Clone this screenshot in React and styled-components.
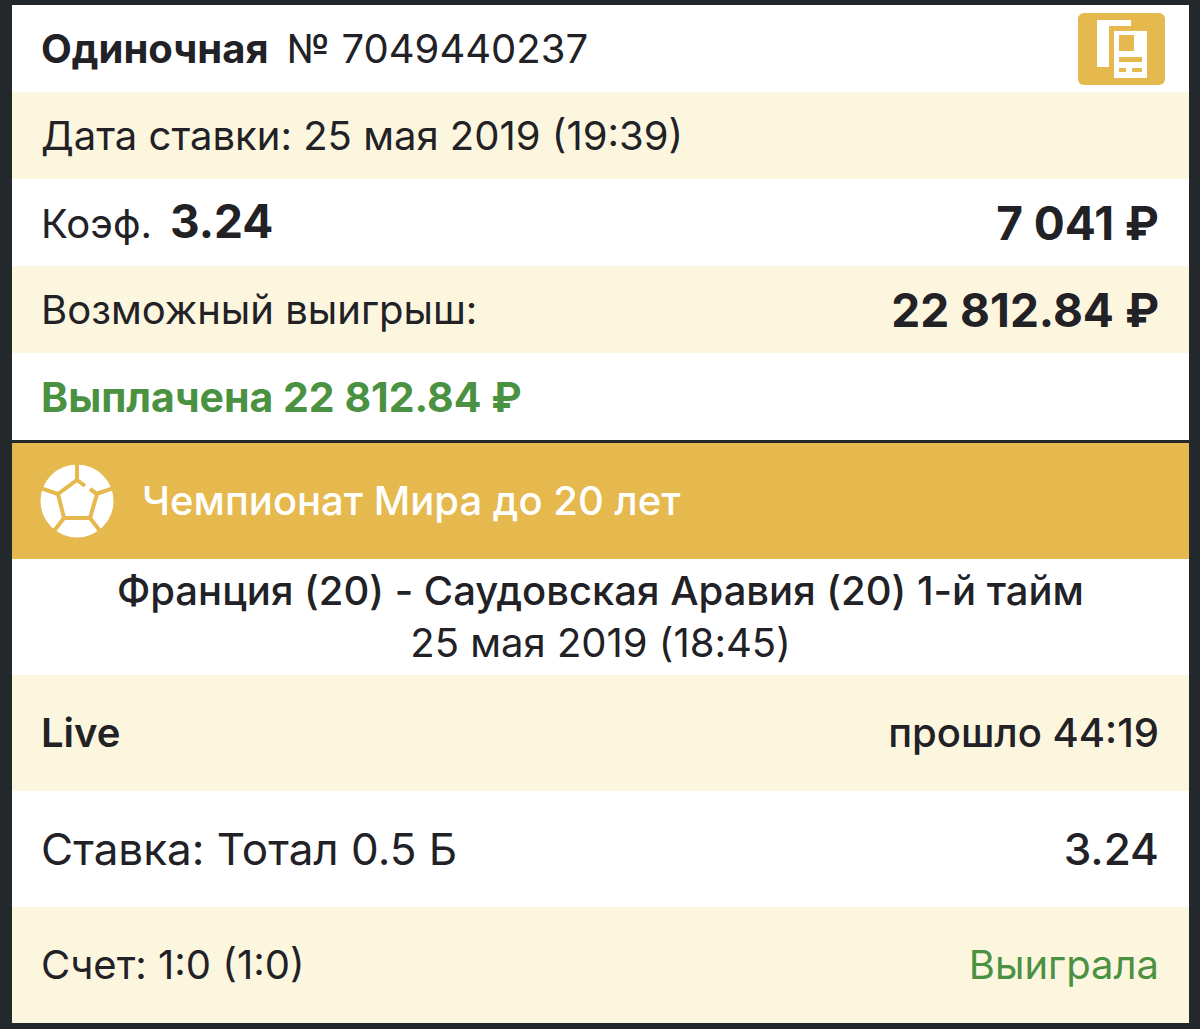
import React from "react";
import styled, { createGlobalStyle } from "styled-components";

const GlobalStyle = createGlobalStyle`
  * { box-sizing: border-box; }
  body {
    margin: 0;
    background: #23282c;
    color: #212126;
    font-family: Inter, "Liberation Sans", sans-serif;
    font-size: 40px;
    line-height: 52px;
  }
`;

const Page = styled.main`
  padding: 5px 11px 6px 12px;
`;

const Ticket = styled.article`
  display: flex;
  flex-direction: column;
  gap: 3px;
`;

const Section = styled.section`
  display: flex;
  flex-direction: column;
`;

const Row = styled.div`
  display: flex;
  align-items: center;
  justify-content: space-between;
  min-height: ${(p) => (p.$tall ? 116 : 87)}px;
  padding: 0 30px 0 29px;
  background: ${(p) => (p.$tinted ? "#fdf6df" : "#ffffff")};
`;

const HeaderRow = styled(Row)`
  padding-right: 24px;
`;

const Pair = styled.div`
  display: flex;
  align-items: baseline;
  gap: 18px;
`;

const Title = styled(Pair)`
  margin: 0;
  font-size: 40px;
  font-weight: 400;
`;

const Text = styled.span`
  color: ${(p) => (p.$win ? "#4b9142" : "inherit")};
  font-size: ${(p) => p.$size || 40}px;
  font-weight: ${(p) => p.$weight || 400};
`;

const Amount = styled(Text)`
  font-size: 46px;
  font-weight: 700;
`;

const CopyButton = styled.button`
  display: flex;
  width: 87px;
  height: 72px;
  padding: 0;
  border: 0;
  border-radius: 6px;
  background: #e6b94f;
  cursor: pointer;
`;

const League = styled.header`
  display: flex;
  align-items: center;
  gap: 28px;
  min-height: 116px;
  padding: 0 28px;
  background: #e6b94f;
  color: #ffffff;
`;

const LeagueName = styled.h2`
  margin: 0;
  font-size: 40px;
  font-weight: 500;
`;

const Match = styled.div`
  display: flex;
  flex-direction: column;
  align-items: center;
  justify-content: center;
  min-height: 116px;
  padding: 0 30px;
  background: #ffffff;
  text-align: center;
  font-variant-ligatures: no-contextual;
`;

function CouponIcon() {
  return (
    <svg width="87" height="72" viewBox="0 0 87 72" aria-hidden="true">
      <path d="M19 7H53V13H31V54H19Z" fill="#fff" />
      <path d="M36 18H69V65H36Z" fill="#fff" />
      <path
        d="M41 22H56V38H41ZM41 44H64V49H41ZM41 55H48V59H41ZM54 55H64V59H54Z"
        fill="#e6b94f"
      />
    </svg>
  );
}

function BallIcon() {
  return (
    <svg width="74" height="74" viewBox="0 0 74 74" aria-hidden="true">
      <circle cx="37" cy="37" r="36.5" fill="#fff" />
      <path
        d="M37 0V17M0 24L18 30M74 24L56 30M14 67L24 54M60 67L50 54M45 22L37 16L18 30L24 54H50L57 30L50 25"
        fill="none"
        stroke="#e6b94f"
        strokeWidth="4"
      />
    </svg>
  );
}

export default function App() {
  return (
    <Page>
      <GlobalStyle />
      <Ticket>
        <Section>
          <HeaderRow>
            <Title as="h1">
              <Text $weight={700}>Одиночная</Text>
              <Text>№ 7049440237</Text>
            </Title>
            <CopyButton type="button" aria-label="Купон">
              <CouponIcon />
            </CopyButton>
          </HeaderRow>
          <Row $tinted>
            <Text>Дата ставки: 25 мая 2019 (19:39)</Text>
          </Row>
          <Row>
            <Pair>
              <Text>Коэф.</Text>
              <Amount>3.24</Amount>
            </Pair>
            <Amount>7 041 ₽</Amount>
          </Row>
          <Row $tinted>
            <Text>Возможный выигрыш:</Text>
            <Amount>22 812.84 ₽</Amount>
          </Row>
          <Row>
            <Text $win $size={41} $weight={700}>Выплачена 22 812.84 ₽</Text>
          </Row>
        </Section>
        <Section>
          <League>
            <BallIcon />
            <LeagueName>Чемпионат Мира до 20 лет</LeagueName>
          </League>
          <Match>
            <Text $weight={500}>Франция (20) - Саудовская Аравия (20) 1-й тайм</Text>
            <Text>25 мая 2019 (18:45)</Text>
          </Match>
          <Row $tall $tinted>
            <Text $weight={600}>Live</Text>
            <Text $weight={500}>прошло 44:19</Text>
          </Row>
          <Row $tall>
            <Text $size={44}>Ставка: Тотал 0.5 Б</Text>
            <Text $size={44} $weight={500}>3.24</Text>
          </Row>
          <Row $tall $tinted>
            <Text>Счет: 1:0 (1:0)</Text>
            <Text $win>Выиграла</Text>
          </Row>
        </Section>
      </Ticket>
    </Page>
  );
}
